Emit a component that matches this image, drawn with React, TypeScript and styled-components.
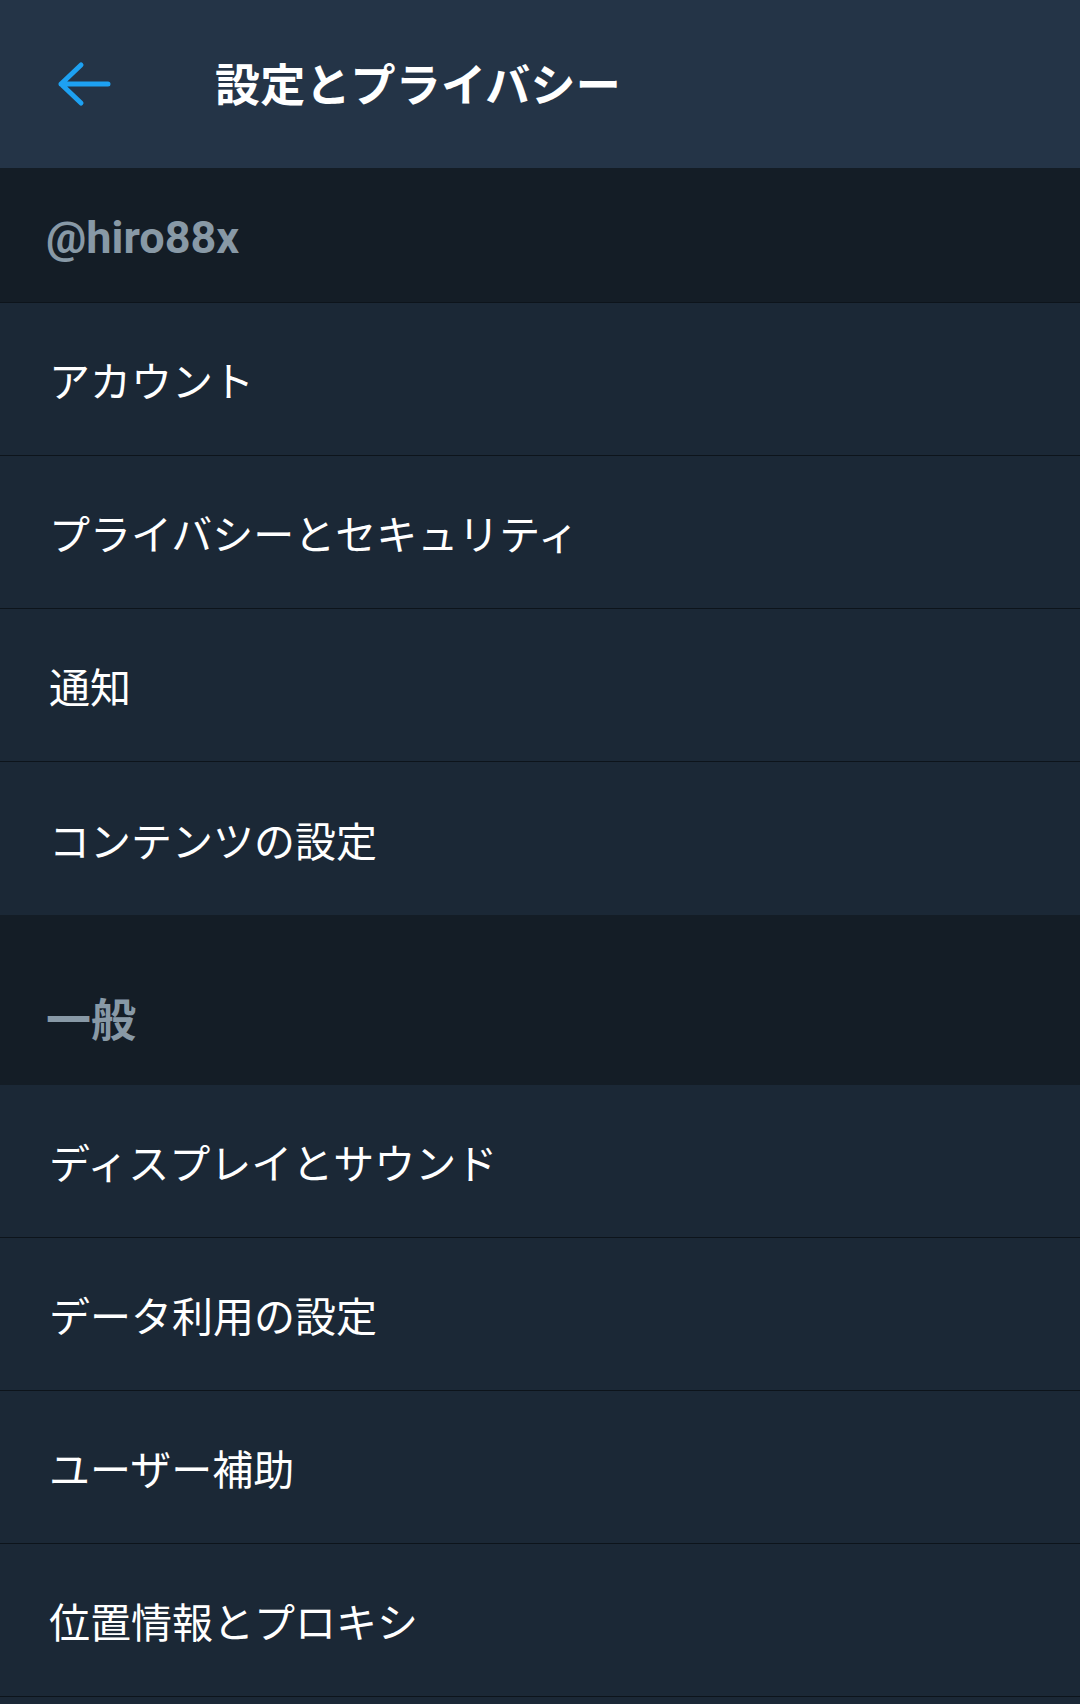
import styled, { createGlobalStyle } from "styled-components";

const GlobalStyle = createGlobalStyle`
	html, body {
		margin: 0;
		padding: 0;
		background: #1b2836;
	}
	body {
		font-family: "Roboto", "Noto Sans CJK JP", sans-serif;
		-webkit-font-smoothing: antialiased;
	}
`;

const Page = styled.div`
	width: 1080px;
	height: 1704px;
	background: #1b2836;
	overflow: hidden;
`;

const TopBar = styled.header`
	height: 168px;
	background: #243447;
	display: flex;
	align-items: center;
	padding-left: 56px;
	gap: 103px;
	box-sizing: border-box;
`;

const BackButton = styled.button`
	width: 56px;
	height: 48px;
	padding: 0;
	border: none;
	background: none;
	display: flex;
	align-items: center;
	justify-content: center;
	cursor: pointer;
`;

const Title = styled.h1`
	margin: 0 0 4px 0;
	color: #ffffff;
	font-family: "Roboto", "Noto Sans CJK JP", sans-serif;
	font-size: 45px;
	font-weight: 700;
	letter-spacing: 0.2px;
`;

const SectionHeader = styled.div<{ $spaced?: boolean; $divider?: boolean }>`
	background: #141d26;
	height: ${(p) => (p.$spaced ? "170px" : "135px")};
	box-sizing: border-box;
	display: flex;
	align-items: flex-end;
	padding: 0 0 ${(p) => (p.$spaced ? "41px" : "42px")} 46px;
	border-bottom: ${(p) => (p.$divider ? "1px solid #0d141b" : "none")};
	color: #8899a6;
	font-family: "Roboto", "Noto Sans CJK JP", sans-serif;
	font-size: 45px;
	font-weight: 700;
	line-height: 1;
`;

const Group = styled.div`
	display: flex;
	flex-direction: column;
`;

const Row = styled.div<{ $last?: boolean }>`
	height: 153px;
	box-sizing: border-box;
	display: flex;
	align-items: center;
	padding-left: 49px;
	background: #1b2836;
	border-bottom: ${(p) => (p.$last ? "none" : "1px solid #0d141b")};
	color: #ffffff;
	font-family: "Noto Sans CJK JP", sans-serif;
	font-size: 41px;
	font-weight: 400;
	cursor: pointer;
`;

const accountItems = ["アカウント", "プライバシーとセキュリティ", "通知", "コンテンツの設定"];
const generalItems = [
	"ディスプレイとサウンド",
	"データ利用の設定",
	"ユーザー補助",
	"位置情報とプロキシ",
];

function BackArrow() {
	return (
		<svg width="56" height="48" viewBox="0 0 56 48" fill="none">
			<path
				d="M5 24 H52 M5 24 L25 5 M5 24 L25 43"
				stroke="#1da1f2"
				strokeWidth="5"
				strokeLinecap="round"
				strokeLinejoin="round"
			/>
		</svg>
	);
}

function App() {
	return (
		<Page>
			<GlobalStyle />
			<TopBar>
				<BackButton aria-label="戻る">
					<BackArrow />
				</BackButton>
				<Title>設定とプライバシー</Title>
			</TopBar>
			<SectionHeader $divider>@hiro88x</SectionHeader>
			<Group>
				{accountItems.map((item, i) => (
					<Row key={item} $last={i === accountItems.length - 1}>
						{item}
					</Row>
				))}
			</Group>
			<SectionHeader $spaced>一般</SectionHeader>
			<Group>
				{generalItems.map((item) => (
					<Row key={item}>{item}</Row>
				))}
			</Group>
		</Page>
	);
}

export default App;
